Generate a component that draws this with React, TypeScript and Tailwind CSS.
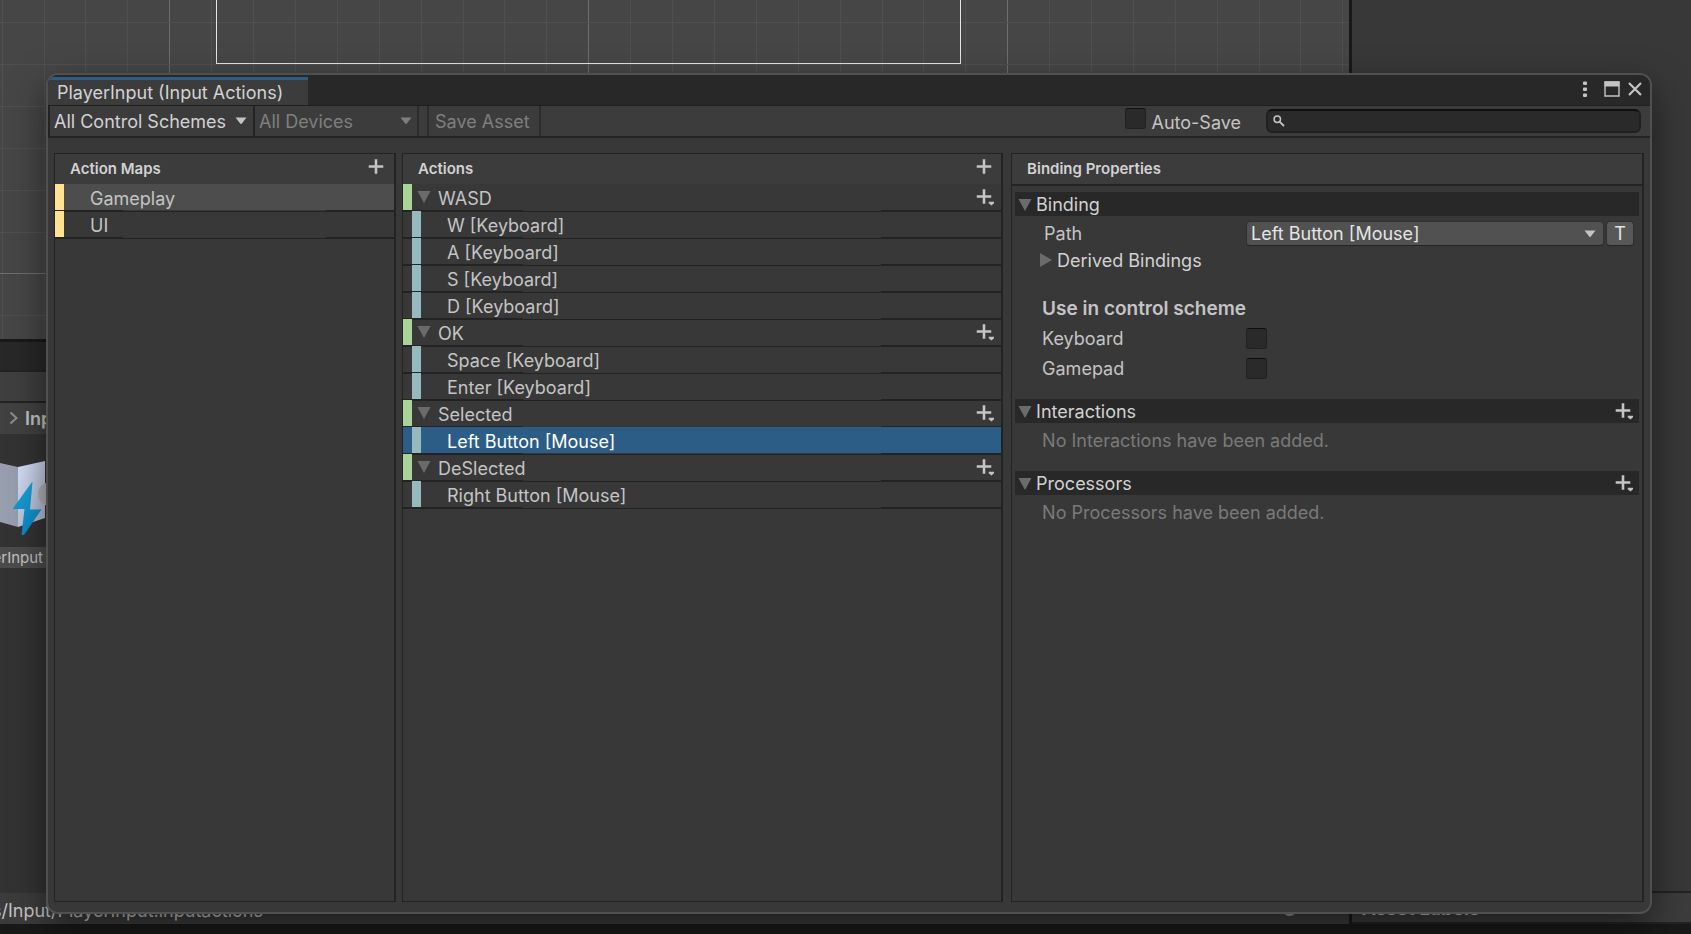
import { useState } from 'react';
import type { ReactNode } from 'react';

interface ActionRow {
  id: string;
  label: string;
  kind: 'map' | 'action' | 'binding';
}

const actionMaps: ActionRow[] = [
  { id: 'gameplay', label: 'Gameplay', kind: 'map' },
  { id: 'ui', label: 'UI', kind: 'map' },
];

const actions: ActionRow[] = [
  { id: 'wasd', label: 'WASD', kind: 'action' },
  { id: 'w', label: 'W [Keyboard]', kind: 'binding' },
  { id: 'a', label: 'A [Keyboard]', kind: 'binding' },
  { id: 's', label: 'S [Keyboard]', kind: 'binding' },
  { id: 'd', label: 'D [Keyboard]', kind: 'binding' },
  { id: 'ok', label: 'OK', kind: 'action' },
  { id: 'space', label: 'Space [Keyboard]', kind: 'binding' },
  { id: 'enter', label: 'Enter [Keyboard]', kind: 'binding' },
  { id: 'selected', label: 'Selected', kind: 'action' },
  { id: 'left', label: 'Left Button [Mouse]', kind: 'binding' },
  { id: 'deselected', label: 'DeSlected', kind: 'action' },
  { id: 'right', label: 'Right Button [Mouse]', kind: 'binding' },
];

const Foldout = ({ closed = false }: { closed?: boolean }) => (
  <svg width="14" height="14" viewBox="0 0 14 14" className="shrink-0 fill-[#6b6b6b]">
    {closed ? <path d="M1 0 L13 7 L1 14 Z" /> : <path d="M0.5 1 H13.5 L7 13 Z" />}
  </svg>
);

const Caret = ({ className }: { className: string }) => (
  <svg width="12" height="8" viewBox="0 0 12 8" className={className}>
    <path d="M0.5 0.5 H11.5 L6.8 6.6 Q6 7.6 5.2 6.6 Z" fill="currentColor" />
  </svg>
);

const Plus = ({ menu = false }: { menu?: boolean }) => (
  <svg width="20" height="20" viewBox="0 0 20 20" className="fill-[#c4c4c4]">
    <path d="M6.7 2.2 H9.3 V8.2 H15.3 V10.8 H9.3 V16.8 H6.7 V10.8 H0.7 V8.2 H6.7 Z" />
    {menu && <path d="M12.7 14.8 H18 V16.2 L15.4 18.6 L12.7 16.2 Z" />}
  </svg>
);

const sceneColumns = Array.from({ length: 33 }, (_, i) => i);
const sceneRows = Array.from({ length: 8 }, (_, i) => i);

const SceneGrid = () => (
  <svg className="block h-full w-full" shapeRendering="crispEdges">
    {sceneColumns.map((i) => {
      const x = Math.round(1.6 + i * 41.9);
      return <line key={i} x1={x + 0.5} x2={x + 0.5} y1="0" y2="100%" stroke={i % 10 === 4 ? '#6e6e6e' : '#505050'} />;
    })}
    {sceneRows.map((i) => {
      const y = Math.round(22 + i * 41.9);
      return <line key={i} x1="0" x2="100%" y1={y + 0.5} y2={y + 0.5} stroke={i === 6 ? '#6e6e6e' : '#505050'} />;
    })}
    <path d="M216.5 0 V63.5 H960.5 V0" fill="none" stroke="#e4e4e4" />
  </svg>
);

const AssetIcon = () => (
  <svg width="48" height="84" viewBox="0 0 48 84" className="block">
    <defs>
      <linearGradient id="page" x1="0" y1="0" x2="0.4" y2="1">
        <stop offset="0" stopColor="#d6e0f8" />
        <stop offset="1" stopColor="#b4bed4" />
      </linearGradient>
      <linearGradient id="bolt" x1="0" y1="0" x2="0" y2="1">
        <stop offset="0" stopColor="#1ca4d6" />
        <stop offset="1" stopColor="#0c86c8" />
      </linearGradient>
    </defs>
    <path d="M0 3 L18 7 V67 L0 62 Z" fill="#979eae" />
    <path d="M18 7 L45 1 V58 L18 67 Z" fill="url(#page)" />
    <circle cx="50" cy="34" r="12" fill="#b4b4b4" />
    <path d="M32 22 L12.5 49 H24.5 L21.5 75 H24 L41.5 49.5 H30 L32.5 22 Z" fill="url(#bolt)" />
  </svg>
);

const Backdrop = () => (
  <div className="flex h-full">
    <div className="flex min-w-0 flex-1 flex-col overflow-hidden">
      <div className="h-[339px] shrink-0 bg-[#464646]">
        <SceneGrid />
      </div>
      <div className="h-[3px] shrink-0 bg-[#191919]" />
      <div className="h-[28px] shrink-0 bg-[#282828]" />
      <div className="h-[33px] shrink-0 border-y-2 border-[#232323] bg-[#3f3f3f]" />
      <div className="flex h-[31px] shrink-0 items-center bg-[#414141] pb-px pl-[9px] text-[18px] font-semibold">
        <svg width="10" height="14" viewBox="0 0 10 14" className="mr-[6px]">
          <path d="M1.5 1.5 L7.5 7 L1.5 12.5" fill="none" stroke="#8e8e8e" strokeWidth="2" />
        </svg>
        Input
      </div>
      <div className="flex-1 bg-[#333333] pt-[26px]">
        <AssetIcon />
        <div className="mt-[3px] flex h-[21px] w-[48px] items-center justify-end bg-[#4c4c4c] pt-px pr-[5px] text-[15px] whitespace-nowrap">
          PlayerInput
        </div>
      </div>
      <div className="flex h-[31px] shrink-0 items-center justify-between bg-[#3c3c3c] pr-[52px]">
        <span className="-ml-2 pt-[3px] text-[18px]">s/Input/PlayerInput.inputactions</span>
        <input
          type="range"
          aria-label="Icon size"
          defaultValue={100}
          className="w-[90px] appearance-none bg-transparent [&::-webkit-slider-thumb]:h-[15px] [&::-webkit-slider-thumb]:w-[15px] [&::-webkit-slider-thumb]:appearance-none [&::-webkit-slider-thumb]:rounded-full [&::-webkit-slider-thumb]:bg-[#999999]"
        />
      </div>
      <div className="h-[10px] shrink-0 bg-[#191919]" />
    </div>
    <div className="flex w-[342px] shrink-0 flex-col border-l-3 border-[#191919] bg-[#383838]">
      <div className="flex-1" />
      <div className="h-[33px] border-y-2 border-[#232323] bg-[#3c3c3c] pl-[10px] text-[19px] leading-[32px] font-semibold">Asset Labels</div>
      <div className="h-[10px] bg-[#191919]" />
    </div>
  </div>
);

const PanelHeader = ({ title, children }: { title: string; children?: ReactNode }) => (
  <div className="flex h-[30px] shrink-0 items-center justify-between bg-[#3c3c3c] pl-[15px]">
    <h2 className="text-[15px] font-semibold text-[#d2d2d2]">{title}</h2>
    {children}
  </div>
);

interface RowProps {
  row: ActionRow;
  first: boolean;
  highlight: string;
  selected: boolean;
  onSelect: () => void;
}

const Row = ({ row, first, highlight, selected, onSelect }: RowProps) => {
  const line = first || selected ? '' : 'border-t border-[#232323]';
  return (
    <li>
      <div className={`flex h-[26px] ${selected ? highlight : ''}`}>
        {row.kind === 'binding' && <span className={`w-[9px] shrink-0 ${line}`} />}
        <span
          className={`w-[9px] shrink-0 ${
            row.kind === 'map' ? 'bg-[#ffe391]' : row.kind === 'action' ? 'bg-[#aad497]' : 'bg-[#95b9bc]'
          }`}
        />
        <div className={`flex min-w-0 flex-1 items-center justify-between ${line}`}>
          <button
            onClick={onSelect}
            className={`flex flex-1 items-center self-end text-left text-[18px] leading-[22px] ${selected && row.kind === 'binding' ? 'text-white' : ''} ${
              row.kind === 'action' ? 'pl-[5px]' : 'pl-[26px]'
            }`}
          >
            {row.kind === 'action' && (
              <span className="mr-[7px] -mt-1">
                <Foldout />
              </span>
            )}
            {row.label}
          </button>
          {row.kind === 'action' && (
            <button aria-label={`Add binding to ${row.label}`} className="mr-[5px] mb-px">
              <Plus menu />
            </button>
          )}
        </div>
      </div>
      <div className="h-px bg-[linear-gradient(to_right,#232323_20%,transparent_20%,transparent_80%,#232323_80%)]" />
    </li>
  );
};

const Section = ({ title, addLabel, children }: { title: string; addLabel?: string; children: ReactNode }) => (
  <section>
    <div className="flex h-6 items-center justify-between bg-[#282828] pr-[4px] pl-[3px]">
      <h3 className="flex items-center gap-1 pt-[2px] text-[18px] leading-6 text-[#d2d2d2]">
        <Foldout />
        {title}
      </h3>
      {addLabel && (
        <button aria-label={addLabel}>
          <Plus menu />
        </button>
      )}
    </div>
    {children}
  </section>
);

const checkboxClass =
  'h-[21px] w-[21px] shrink-0 appearance-none rounded-[3px] border border-[#212121] border-t-[#0f0f0f] bg-[#2a2a2a] checked:bg-[#4c7eff]';

const SchemeToggle = ({ label }: { label: string }) => (
  <label className="flex h-[30px] items-center text-[18px]">
    <span className="w-[204px]">{label}</span>
    <input type="checkbox" className={checkboxClass} />
  </label>
);

export default function App() {
  const [activeMap, setActiveMap] = useState('gameplay');
  const [activeAction, setActiveAction] = useState('left');

  return (
    <div className="relative h-screen overflow-hidden bg-[#191919] font-['Inter',sans-serif] text-[#c4c4c4]">
      <Backdrop />

      <main className="absolute top-[73px] right-[39px] bottom-[20px] left-[46px] flex flex-col overflow-hidden rounded-xl border-2 border-[#505050] bg-[#383838] shadow-[0_14px_36px_rgba(0,0,0,0.5)]">
        <header className="flex h-[31px] shrink-0 items-end justify-between border-b border-[#1f1f1f] bg-[#282828]">
          <h1 className="h-[28px] w-[260px] border-t-3 border-[#2c5d87] bg-[#3c3c3c] pl-[9px] text-[18px] leading-[26px] text-[#d2d2d2]">
            PlayerInput (Input Actions)
          </h1>
          <div className="flex h-full items-center pr-[7px] pb-[2px]">
            <button aria-label="Menu" className="mr-[16px]">
              <svg width="6" height="16" viewBox="0 0 6 16" className="fill-[#c4c4c4]">
                <rect x="1" y="0.5" width="4" height="3.4" rx="1" />
                <rect x="1" y="6.5" width="4" height="3.4" rx="1" />
                <rect x="1" y="12.5" width="4" height="3.4" rx="1" />
              </svg>
            </button>
            <button aria-label="Maximize" className="mr-[7px]">
              <svg width="16" height="16" viewBox="0 0 16 16">
                <path d="M1 1 H15 V15 H1 Z" fill="none" stroke="#c4c4c4" strokeWidth="1.4" />
                <path d="M0.5 0.5 H15.5 V5.5 H0.5 Z" fill="#c4c4c4" />
              </svg>
            </button>
            <button aria-label="Close">
              <svg width="16" height="16" viewBox="0 0 16 16">
                <path d="M2 2 L14 14 M14 2 L2 14" stroke="#c4c4c4" strokeWidth="2.2" />
              </svg>
            </button>
          </div>
        </header>

        <div className="flex h-[32px] shrink-0 items-stretch border-b-2 border-[#232323] bg-[#3c3c3c] text-[18px]">
          <div className="grid w-[207px] items-center border-x-2 border-[#232323]">
            <select aria-label="Control scheme" className="col-start-1 row-start-1 h-full w-full appearance-none pl-[4px] text-[#d2d2d2]">
              <option>All Control Schemes</option>
            </select>
            <Caret className="pointer-events-none col-start-1 row-start-1 mr-[6px] justify-self-end" />
          </div>
          <div className="grid w-[164px] items-center border-r-2 border-[#2c2c2c] text-[#7f7f7f]">
            <select aria-label="Device" disabled className="col-start-1 row-start-1 h-full w-full appearance-none pl-[4px]">
              <option>All Devices</option>
            </select>
            <Caret className="pointer-events-none col-start-1 row-start-1 mr-[5px] justify-self-end" />
          </div>
          <button disabled className="ml-[8px] w-[114px] border-x-2 border-[#2c2c2c] pl-[6px] text-left text-[#7f7f7f]">
            Save Asset
          </button>
          <div className="ml-auto flex items-center">
            <label className="flex items-center gap-[6px]">
              <input type="checkbox" className={`${checkboxClass} mb-[6px]`} />
              <span className="pt-[2px]">Auto-Save</span>
            </label>
            <div className="mr-[9px] ml-[25px] flex h-[24px] w-[375px] items-center rounded-md border-2 border-[#202020] border-t-[#0f0f0f] bg-[#2a2a2a] pl-[5px]">
              <svg width="12" height="12" viewBox="0 0 12 12" fill="none" stroke="#c4c4c4">
                <circle cx="4.3" cy="4.3" r="3.2" strokeWidth="1.5" />
                <path d="M6.8 6.8 L11 11" strokeWidth="1.8" />
              </svg>
              <input type="text" aria-label="Search" className="ml-1 min-w-0 flex-1 bg-transparent text-[16px] outline-none" />
            </div>
          </div>
        </div>

        <div className="flex min-h-0 flex-1 px-[6px] pt-[15px] pb-[10px]">
          <section className="mr-[6px] flex w-[342px] shrink-0 flex-col border border-r-2 border-[#232323]">
            <PanelHeader title="Action Maps">
              <button aria-label="Add action map" className="mr-[6px] mb-[5px]">
                <Plus />
              </button>
            </PanelHeader>
            <ul className="border-b border-[#232323]">
              {actionMaps.map((row, i) => (
                <Row key={row.id} row={row} first={i === 0} highlight="bg-[#4d4d4d]" selected={row.id === activeMap} onSelect={() => setActiveMap(row.id)} />
              ))}
            </ul>
          </section>

          <section className="mr-[8px] flex min-w-0 flex-[601] flex-col border border-r-2 border-[#232323]">
            <PanelHeader title="Actions">
              <button aria-label="Add action" className="mr-[5px] mb-[5px]">
                <Plus />
              </button>
            </PanelHeader>
            <ul className="border-b border-[#232323]">
              {actions.map((row, i) => (
                <Row key={row.id} row={row} first={i === 0} highlight="bg-[#2c5d87]" selected={row.id === activeAction} onSelect={() => setActiveAction(row.id)} />
              ))}
            </ul>
          </section>

          <section className="flex min-w-0 flex-[633] flex-col border border-r-2 border-[#232323]">
            <PanelHeader title="Binding Properties" />
            <div className="border-t-2 border-[#232323] px-[3px] pt-[6px]">
              <Section title="Binding">
                <div className="mt-[5px] flex h-[25px] items-center pr-[5px] pl-[29px] text-[18px]">
                  <label htmlFor="path" className="w-[202px] shrink-0 leading-[24px]">
                    Path
                  </label>
                  <div className="grid h-full flex-1 items-center rounded-[4px] border border-[#303030] border-b-[#242424] bg-[#515151] text-[#e4e4e4]">
                    <select id="path" className="col-start-1 row-start-1 w-full appearance-none pl-[4px] leading-[22px]">
                      <option>Left Button [Mouse]</option>
                    </select>
                    <Caret className="pointer-events-none col-start-1 row-start-1 mr-[7px] justify-self-end text-[#c4c4c4]" />
                  </div>
                  <button className="ml-[2px] h-full w-[28px] rounded-[4px] border border-[#303030] border-b-[#242424] bg-[#585858] text-[18px] leading-[22px] text-[#e4e4e4]">
                    T
                  </button>
                </div>
                <button className="mt-[2px] ml-[24px] flex h-[24px] items-center gap-1 text-[18px] text-[#d2d2d2]">
                  <Foldout closed />
                  Derived Bindings
                </button>
                <div className="mt-[24px] mb-[16px] pl-[27px]">
                  <h4 className="h-[27px] text-[19px] leading-[26px] font-semibold">Use in control scheme</h4>
                  <SchemeToggle label="Keyboard" />
                  <SchemeToggle label="Gamepad" />
                </div>
              </Section>
              <Section title="Interactions" addLabel="Add interaction">
                <p className="mb-[12px] pl-[27px] text-[18px] leading-[36px] text-[#7a7a7a]">No Interactions have been added.</p>
              </Section>
              <Section title="Processors" addLabel="Add processor">
                <p className="pl-[27px] text-[18px] leading-[36px] text-[#7a7a7a]">No Processors have been added.</p>
              </Section>
            </div>
          </section>
        </div>
      </main>
    </div>
  );
}
